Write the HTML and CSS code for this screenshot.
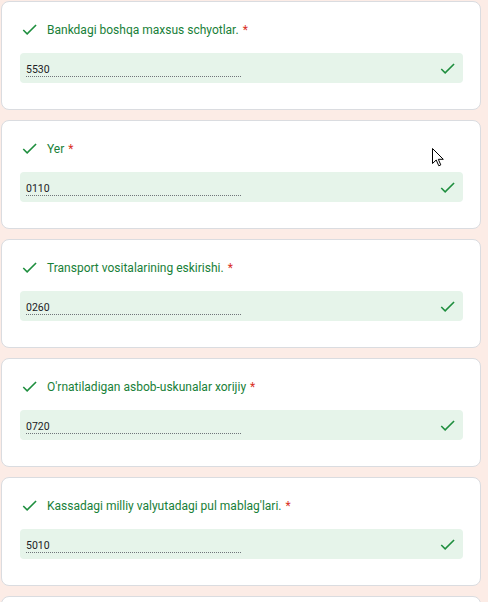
FILE: index.html
```html
<!DOCTYPE html>
<html>
<head>
  <title>Hisob schyotlari</title>
  <link rel="stylesheet" href="styles.css">
</head>
<body>
  <div class="list">
    <div class="card">
      <div class="question">
        <svg class="check" viewBox="0 0 24 24"><path d="M9 16.17L4.83 12l-1.42 1.41L9 19 21 7l-1.41-1.41z"/></svg>
        <span class="title">Bankdagi boshqa maxsus schyotlar.</span><span class="req">*</span>
      </div>
      <div class="answer">
        <span class="value">5530</span>
        <svg class="check" viewBox="0 0 24 24"><path d="M9 16.17L4.83 12l-1.42 1.41L9 19 21 7l-1.41-1.41z"/></svg>
      </div>
    </div>
    <div class="card">
      <div class="question">
        <svg class="check" viewBox="0 0 24 24"><path d="M9 16.17L4.83 12l-1.42 1.41L9 19 21 7l-1.41-1.41z"/></svg>
        <span class="title">Yer</span><span class="req">*</span>
      </div>
      <div class="answer">
        <span class="value">0110</span>
        <svg class="check" viewBox="0 0 24 24"><path d="M9 16.17L4.83 12l-1.42 1.41L9 19 21 7l-1.41-1.41z"/></svg>
      </div>
    </div>
    <div class="card">
      <div class="question">
        <svg class="check" viewBox="0 0 24 24"><path d="M9 16.17L4.83 12l-1.42 1.41L9 19 21 7l-1.41-1.41z"/></svg>
        <span class="title">Transport vositalarining eskirishi.</span><span class="req">*</span>
      </div>
      <div class="answer">
        <span class="value">0260</span>
        <svg class="check" viewBox="0 0 24 24"><path d="M9 16.17L4.83 12l-1.42 1.41L9 19 21 7l-1.41-1.41z"/></svg>
      </div>
    </div>
    <div class="card">
      <div class="question">
        <svg class="check" viewBox="0 0 24 24"><path d="M9 16.17L4.83 12l-1.42 1.41L9 19 21 7l-1.41-1.41z"/></svg>
        <span class="title">O'rnatiladigan asbob-uskunalar xorijiy</span><span class="req">*</span>
      </div>
      <div class="answer">
        <span class="value">0720</span>
        <svg class="check" viewBox="0 0 24 24"><path d="M9 16.17L4.83 12l-1.42 1.41L9 19 21 7l-1.41-1.41z"/></svg>
      </div>
    </div>
    <div class="card">
      <div class="question">
        <svg class="check" viewBox="0 0 24 24"><path d="M9 16.17L4.83 12l-1.42 1.41L9 19 21 7l-1.41-1.41z"/></svg>
        <span class="title">Kassadagi milliy valyutadagi pul mablag'lari.</span><span class="req">*</span>
      </div>
      <div class="answer">
        <span class="value">5010</span>
        <svg class="check" viewBox="0 0 24 24"><path d="M9 16.17L4.83 12l-1.42 1.41L9 19 21 7l-1.41-1.41z"/></svg>
      </div>
    </div>
    <!-- next question, only its top edge is in view -->
    <div class="card"></div>
  </div>

  <!-- mouse pointer visible in the screenshot -->
  <svg class="pointer" viewBox="0 0 13 19">
    <path d="M0.5 0.5 L0.5 15.5 L4.2 12 L6.8 17.8 L8.8 16.9 L6.3 11.3 L11.3 11.3 Z"/>
  </svg>
</body>
</html>
```

FILE: styles.css
```css
html, body {
  margin: 0;
  padding: 0;
  height: 100%;
  overflow: hidden;
  background-color: #fcece6;
  font-family: Roboto, Arial, sans-serif;
}
.list {
  display: flex;
  flex-direction: column;
  gap: 10px;
  width: 480px;
  padding: 1px 0 0 1px;
}
.card {
  height: 109px;
  box-sizing: border-box;
  padding: 17px 17px 0 18px;
  border: 1px solid #dadce0;
  border-radius: 8px;
  background-color: #fff;
}
.question {
  display: flex;
  align-items: center;
  height: 21px;
  font-size: 12px;
}
.question .check {
  width: 19px;
  height: 19px;
  margin-right: 8px;
}
.check {
  fill: #1e8e3e;
  flex: none;
}
.title {
  color: #188038;
}
.req {
  color: #d93025;
  margin-left: 4px;
}
.answer {
  display: flex;
  align-items: center;
  justify-content: space-between;
  height: 30px;
  margin-top: 13px;
  padding: 0 6px;
  border-radius: 4px;
  background-color: #e6f4ea;
}
.value {
  width: 215px;
  font-size: 10.5px;
  line-height: 13px;
  color: #202124;
  border-bottom: 1px dotted #70757a;
  margin-top: 3px;
}
.answer .check {
  width: 19px;
  height: 19px;
}
.pointer {
  position: absolute;
  left: 432px;
  top: 148px;
  width: 13px;
  height: 19px;
}
.pointer path {
  fill: #fff;
  stroke: #000;
  stroke-width: 1;
}
```
